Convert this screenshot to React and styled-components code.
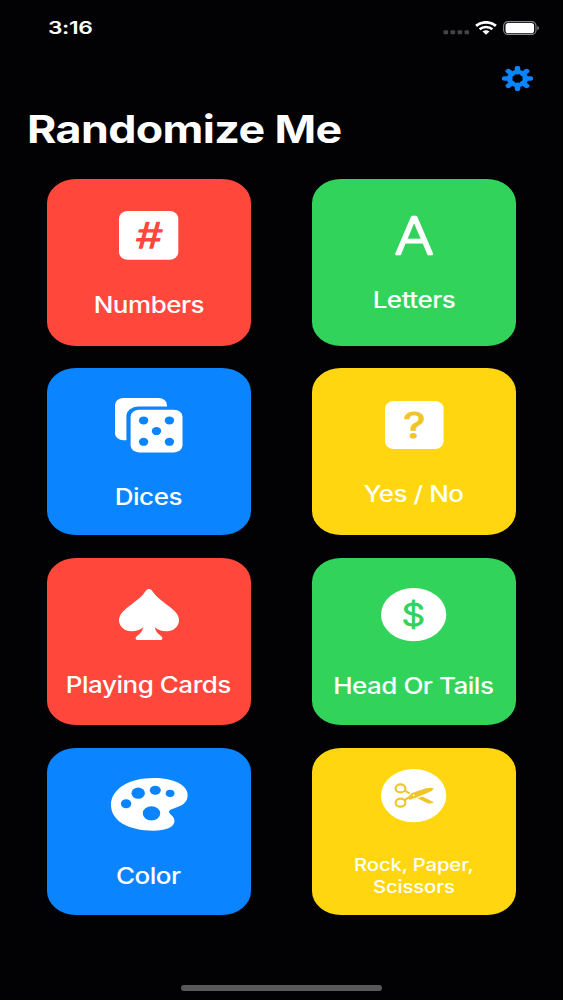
import React from 'react'
import styled, { createGlobalStyle } from 'styled-components'

const colors = {
  background: '#020103',
  red: '#ff473c',
  green: '#32d35b',
  blue: '#0b84ff',
  yellow: '#ffd60f',
  gold: '#f0c52c',
}

const GlobalStyle = createGlobalStyle`
  body {
    margin: 0;
    background: ${colors.background};
  }
`

const Screen = styled.div`
  display: flex;
  flex-direction: column;
  box-sizing: border-box;
  width: 563px;
  height: 1000px;
  overflow: hidden;
  background: ${colors.background};
  color: #fff;
  font-family: Inter, 'Liberation Sans', sans-serif;
`

const StatusBar = styled.header`
  display: flex;
  justify-content: space-between;
  align-items: center;
  height: 55px;
  padding: 0 24px 0 48px;
`

const Clock = styled.span`
  font-size: 17.4px;
  font-weight: 600;
  letter-spacing: -0.3px;
  line-height: 20px;
  transform: scaleX(1.31);
  transform-origin: left center;
`

const StatusIcons = styled.div`
  display: flex;
  align-items: center;
  gap: 6px;
`

const Toolbar = styled.div`
  display: flex;
  justify-content: flex-end;
  height: 25px;
  padding: 11px 30px 0 0;
`

const Title = styled.h1`
  align-self: flex-start;
  margin: 16px 0 0 27px;
  font-size: 37.6px;
  font-weight: 700;
  letter-spacing: -0.5px;
  line-height: 46px;
  white-space: nowrap;
  transform: scaleX(1.19);
  transform-origin: left center;
`

const Grid = styled.main`
  display: grid;
  grid-template-columns: 204px 204px;
  grid-auto-rows: 167px;
  gap: 22.67px 61px;
  padding: 25.7px 0 0 47px;
`

const Tile = styled.div`
  display: flex;
  flex-direction: column;
  align-items: center;
  justify-content: center;
  gap: 32px;
  box-sizing: border-box;
  padding-top: 4px;
  border-radius: 29px / 24px;
  background: ${({ $color }) => $color};

  svg {
    flex: none;
    overflow: visible;
  }
`

const Label = styled.span`
  font-size: ${({ $small }) => ($small ? '17.4px' : '22.3px')};
  font-weight: 500;
  letter-spacing: ${({ $small }) => ($small ? '-0.1px' : '-0.4px')};
  line-height: ${({ $small }) => ($small ? '22px' : '26px')};
  text-align: center;
  white-space: pre;
  transform: translateX(-0.5px) scaleX(1.165);
`

const HomeIndicator = styled.div`
  align-self: center;
  width: 201px;
  height: 6px;
  margin: auto 0 9px;
  border-radius: 3px;
  background: #58575a;
`

const Glyph = styled.text`
  font-family: Inter, 'Liberation Sans', sans-serif;
  font-weight: ${({ $weight }) => $weight};
  text-anchor: middle;
  stroke-linejoin: round;
`

const Signal = () => (
  <svg width="26" height="14" viewBox="0 0 26 14" fill="#444346">
    {[0.5, 7.5, 14.5, 21.5].map(x => (
      <rect key={x} x={x} y="9.3" width="4.6" height="4" rx="1" />
    ))}
  </svg>
)

const Wifi = () => (
  <svg width="22" height="14" viewBox="0 0 22 14" fill="none" stroke="#fff">
    <path d="M1.1 4.9C6.6 0.2 15.4 0.2 20.9 4.9" strokeWidth="2.9" />
    <path d="M4.6 8.3C8.1 5.3 13.9 5.3 17.4 8.3" strokeWidth="2.6" />
    <path d="M7.5 10.6C9.5 8.9 12.5 8.9 14.5 10.6L11 13.8Z" fill="#fff" stroke="none" />
  </svg>
)

const Battery = () => (
  <svg width="36" height="14" viewBox="0 0 36 14">
    <rect x="0.6" y="0.6" width="32.4" height="12.9" rx="4.4" fill="none" stroke="#8a898c" strokeWidth="1.1" />
    <rect x="2.5" y="2" width="28.6" height="10.2" rx="2.8" fill="#fff" />
    <path d="M34.4 5.1Q36 5.6 36 7.1T34.4 9.2Z" fill="#8a898c" />
  </svg>
)

const Gear = () => (
  <svg width="31" height="25" viewBox="0 0 24 24" preserveAspectRatio="none">
    <g stroke={colors.blue} strokeWidth="4.3" strokeLinecap="round">
      {[0, 45, 90, 135, 180, 225, 270, 315].map(angle => (
        <path key={angle} d="M12 2V6" transform={`rotate(${angle} 12 12)`} />
      ))}
    </g>
    <circle cx="12" cy="12" r="6.3" fill="none" stroke={colors.blue} strokeWidth="4" />
  </svg>
)

const NumberIcon = () => (
  <svg width="59.3" height="48.7" viewBox="0 0 59.3 48.7">
    <rect width="59.3" height="48.7" rx="8.5" ry="7.5" fill="#fff" />
    <Glyph
      $weight={300}
      fontSize="35"
      fill={colors.red}
      stroke={colors.red}
      strokeWidth="1.4"
      transform="translate(29.6 36.6) skewX(-4) scale(1.18 1)"
    >
      #
    </Glyph>
  </svg>
)

const LetterIcon = () => (
  <svg width="38.7" height="39.3" viewBox="0 0 38.7 39.3">
    <Glyph
      $weight={200}
      fontSize="50"
      fill="#fff"
      stroke="#fff"
      strokeWidth="2.6"
      transform="translate(19.3 38) scale(1.17 1)"
    >
      A
    </Glyph>
  </svg>
)

const DiceIcon = () => (
  <svg width="67.5" height="54.5" viewBox="0 0 67.5 54.5">
    <rect width="52" height="42.3" rx="8.5" ry="7" fill="#fff" />
    <rect x="11.4" y="8.6" width="60" height="50" rx="11.5" ry="9.5" fill={colors.blue} />
    <rect x="15.6" y="11.8" width="51.9" height="42.6" rx="8.5" ry="7" fill="#fff" />
    {[[28.6, 22.4], [54.4, 22.4], [41.5, 33.1], [28.6, 43.8], [54.4, 43.8]].map(([x, y]) => (
      <ellipse key={`${x}-${y}`} cx={x} cy={y} rx="4.7" ry="4" fill={colors.blue} />
    ))}
  </svg>
)

const QuestionIcon = () => (
  <svg width="58.6" height="48" viewBox="0 0 58.6 48">
    <rect width="58.6" height="48" rx="8.5" ry="7.5" fill="#fff" />
    <Glyph
      $weight={400}
      fontSize="36"
      fill={colors.gold}
      stroke={colors.gold}
      strokeWidth="1.1"
      transform="translate(29.3 36.6) scale(1.2 1)"
    >
      ?
    </Glyph>
  </svg>
)

const SpadeIcon = () => (
  <svg width="60" height="51" viewBox="0 0 60 51" fill="#fff">
    <path d="M30 0C32 0 33 1.4 34.2 3.3C39 10 47 14.6 53 19.8C57.5 23.5 60 27 60 31.3C60 37.5 54.5 42.3 47.5 42.3C42.5 42.3 38.8 40.8 35.7 38.2C36.7 42.6 39 44.8 42 47C44.4 48.9 43.5 51 41 51H19C16.5 51 15.6 48.9 18 47C21 44.8 23.3 42.6 24.3 38.2C21.2 40.8 17.5 42.3 12.5 42.3C5.5 42.3 0 37.5 0 31.3C0 27 2.5 23.5 7 19.8C13 14.6 21 10 25.8 3.3C27 1.4 28 0 30 0Z" />
  </svg>
)

const CoinIcon = () => (
  <svg width="65.3" height="53.3" viewBox="0 0 65.3 53.3">
    <ellipse cx="32.65" cy="26.65" rx="32.65" ry="26.65" fill="#fff" />
    <Glyph
      $weight={300}
      fontSize="31"
      fill={colors.green}
      stroke={colors.green}
      strokeWidth="1.1"
      transform="translate(32.4 37.9) scale(1.21 1)"
    >
      $
    </Glyph>
  </svg>
)

const PaletteIcon = () => (
  <svg width="76.7" height="52.7" viewBox="0 0 76.7 52.7">
    <path
      d="M42.5 0C63 0 76.7 7.2 76.7 17C76.7 24.5 71 27.8 64 30C60 31.3 58 32.3 58 33.8C58 36.4 63.5 38 63.5 43C63.5 49.5 54 52.7 42.5 52.7C17 52.7 0 42.5 0 27C0 11 18 0 42.5 0Z"
      fill="#fff"
    />
    <g fill={colors.blue}>
      <ellipse cx="15.1" cy="25.7" rx="5.2" ry="4.5" />
      <ellipse cx="27.2" cy="15.2" rx="6.7" ry="5.6" />
      <ellipse cx="44.3" cy="12.2" rx="5.5" ry="4.5" />
      <ellipse cx="59.1" cy="15.3" rx="4.4" ry="3.6" />
      <ellipse cx="40.5" cy="35.4" rx="8.7" ry="7.2" />
    </g>
  </svg>
)

const ScissorsIcon = () => (
  <svg width="65.3" height="53.3" viewBox="0 0 65.3 53.3">
    <ellipse cx="32.65" cy="26.65" rx="32.65" ry="26.65" fill="#fff" />
    <g fill="none" stroke={colors.gold} strokeWidth="2.2">
      <ellipse cx="19.5" cy="19.4" rx="4.9" ry="4" />
      <ellipse cx="19.5" cy="33.7" rx="4.9" ry="4" />
      <path d="M23.8 21.6L28.6 24.4" />
      <path d="M23.5 31L28.5 28.2L31.5 25" />
    </g>
    <g fill={colors.gold}>
      <path d="M28 31V27.5L31 24L45 19.3Q49.5 18.2 52.8 19.4Q52 21.4 48 23.2L35.5 28.6Z" />
      <path d="M36.5 29.3L41.5 27.4L52.8 33.2Q50 35.4 46 34Z" />
    </g>
    <circle cx="32.7" cy="26.3" r="0.9" fill="#fff" />
  </svg>
)

const modes = [
  { label: 'Numbers', color: colors.red, Icon: NumberIcon },
  { label: 'Letters', color: colors.green, Icon: LetterIcon },
  { label: 'Dices', color: colors.blue, Icon: DiceIcon },
  { label: 'Yes / No', color: colors.yellow, Icon: QuestionIcon },
  { label: 'Playing Cards', color: colors.red, Icon: SpadeIcon },
  { label: 'Head Or Tails', color: colors.green, Icon: CoinIcon },
  { label: 'Color', color: colors.blue, Icon: PaletteIcon },
  { label: 'Rock, Paper,\nScissors', color: colors.yellow, Icon: ScissorsIcon, small: true },
]

const App = () => (
  <Screen>
    <GlobalStyle />
    <StatusBar>
      <Clock>3:16</Clock>
      <StatusIcons>
        <Signal />
        <Wifi />
        <Battery />
      </StatusIcons>
    </StatusBar>
    <Toolbar>
      <Gear />
    </Toolbar>
    <Title>Randomize Me</Title>
    <Grid>
      {modes.map(({ label, color, Icon, small }) => (
        <Tile key={label} $color={color}>
          <Icon />
          <Label $small={small}>{label}</Label>
        </Tile>
      ))}
    </Grid>
    <HomeIndicator />
  </Screen>
)

export default App
